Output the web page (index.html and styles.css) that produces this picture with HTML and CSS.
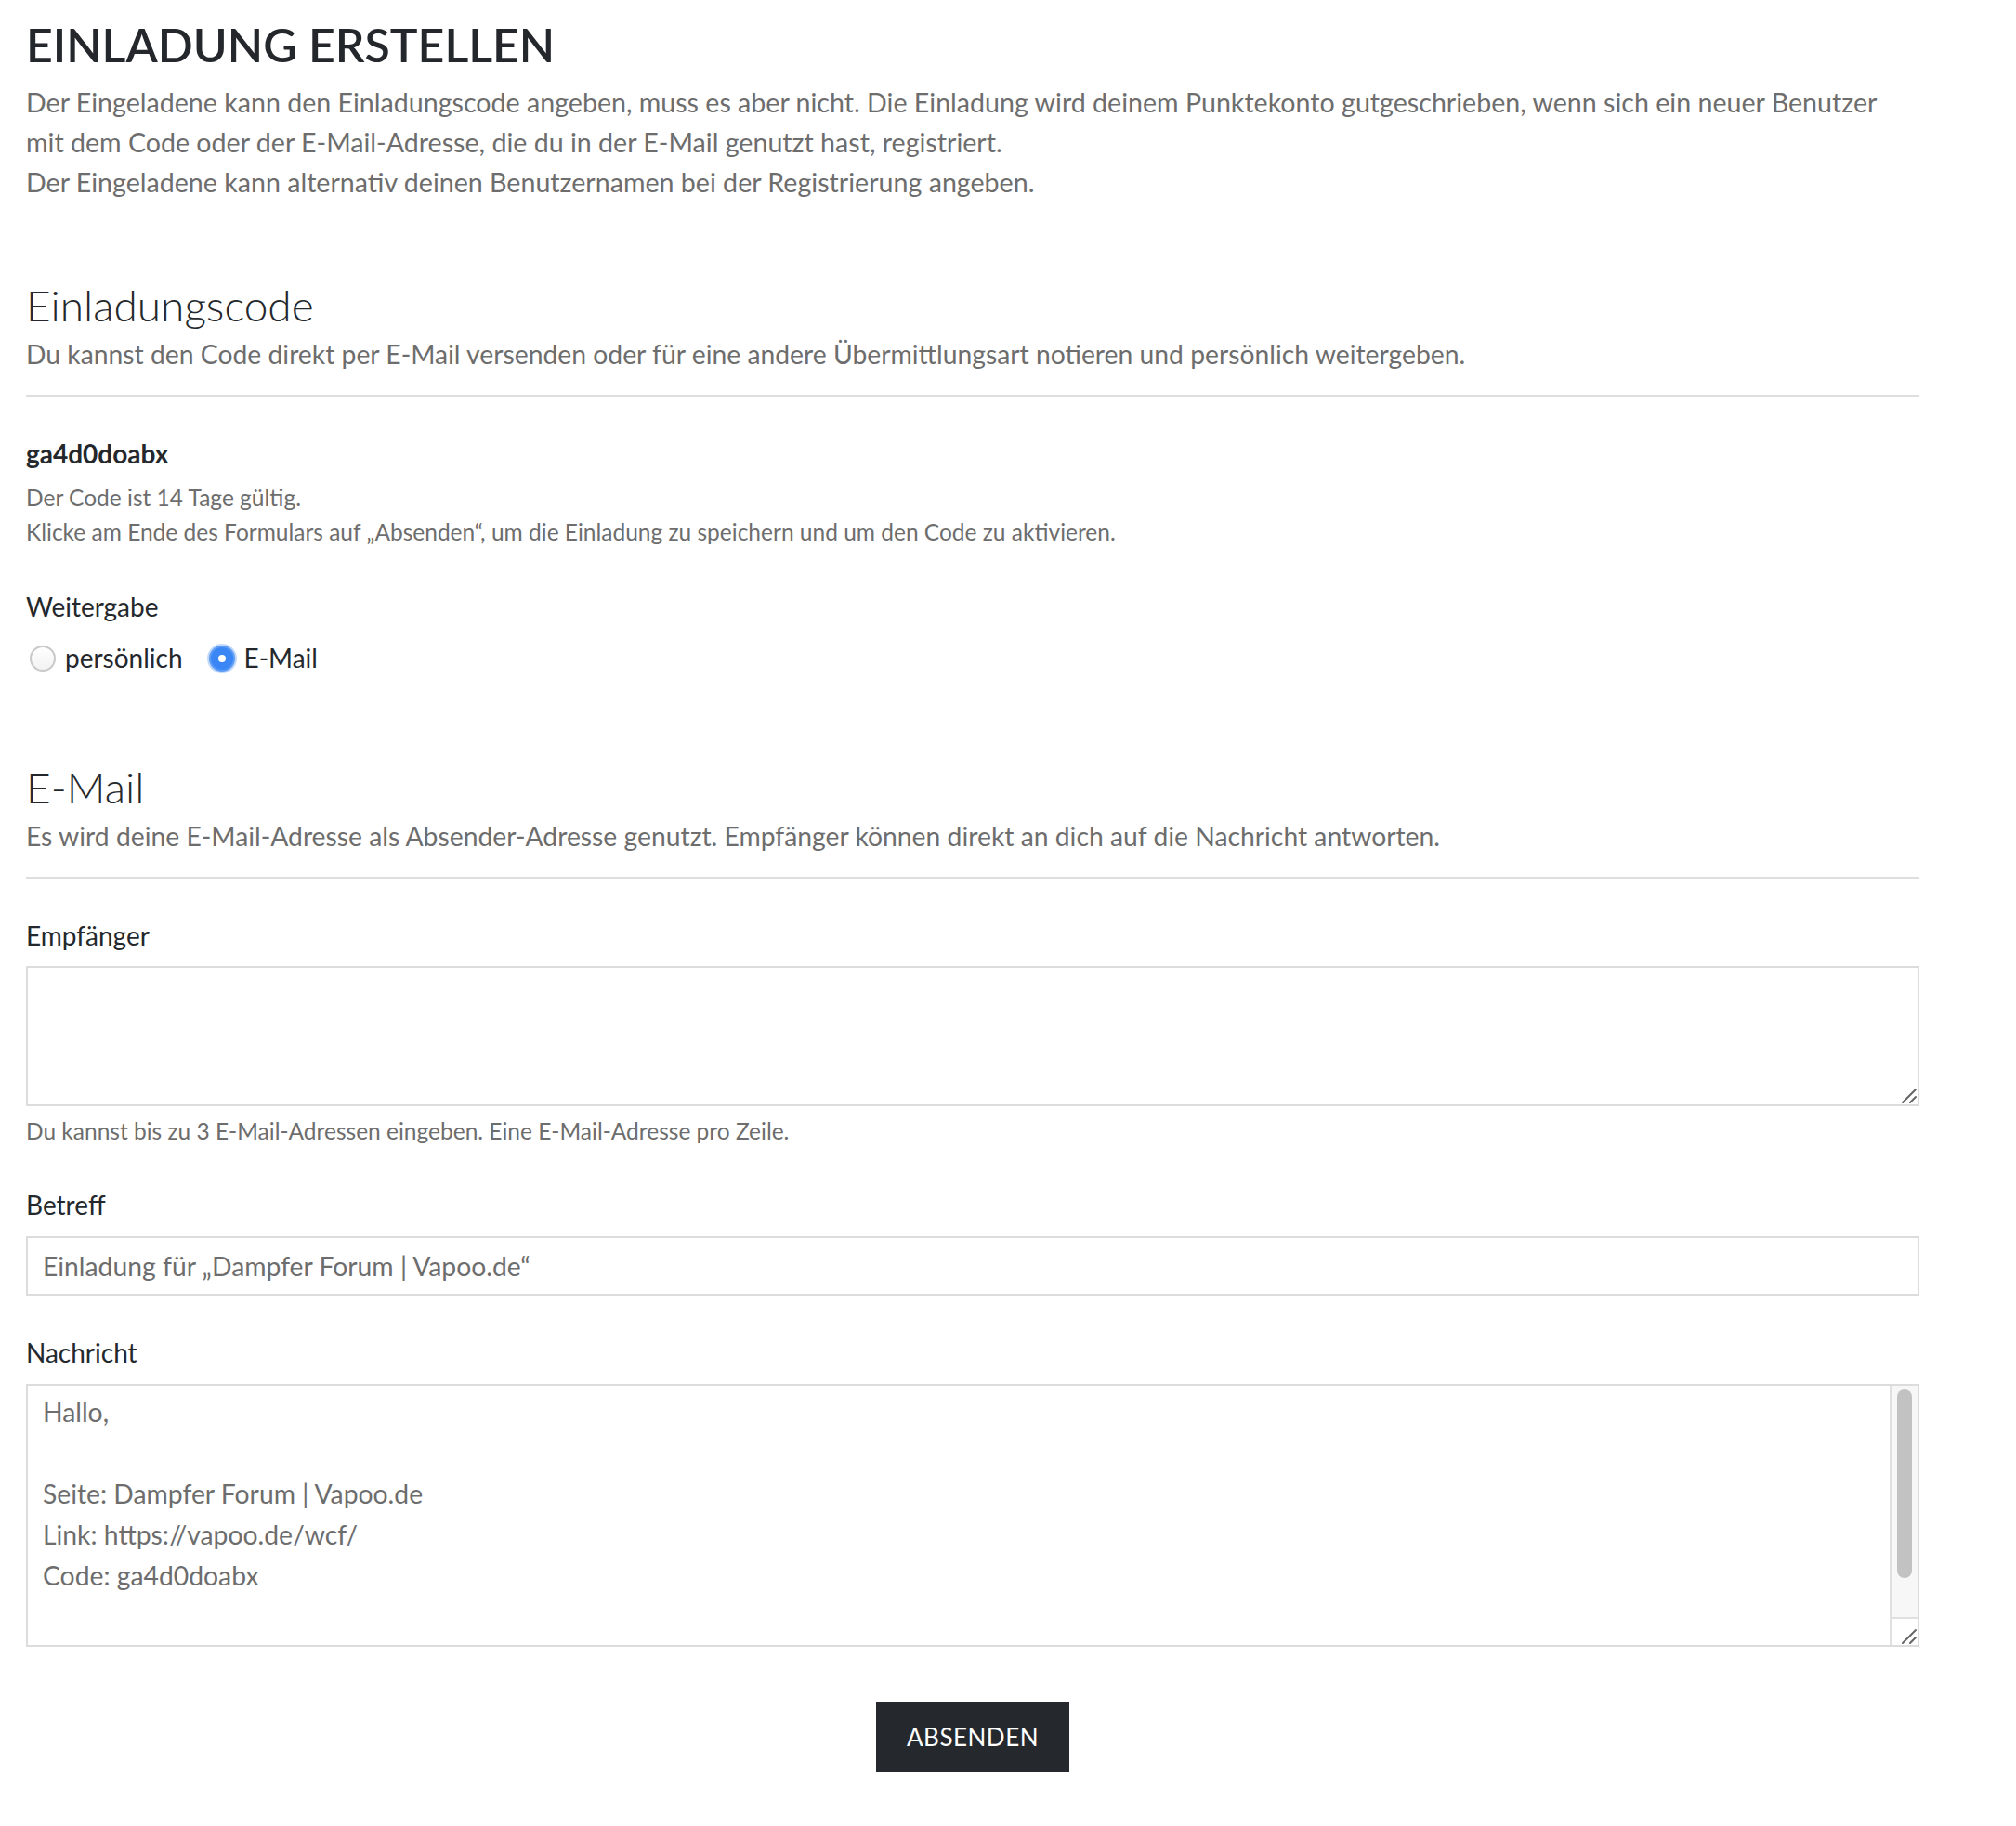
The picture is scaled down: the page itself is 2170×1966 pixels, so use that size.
FILE: index.html
```html
<!DOCTYPE html>
<html lang="de">
<head>
<meta charset="utf-8">
<title>Einladung erstellen</title>
<link rel="stylesheet" href="styles.css">
</head>
<body>
<main class="page">
  <header class="content-header">
    <h1 class="content-title">EINLADUNG ERSTELLEN</h1>
    <p class="content-desc">Der Eingeladene kann den Einladungscode angeben, muss es aber nicht. Die Einladung wird deinem Punktekonto gutgeschrieben, wenn sich ein neuer Benutzer mit dem Code oder der E-Mail-Adresse, die du in der E-Mail genutzt hast, registriert.<br>Der Eingeladene kann alternativ deinen Benutzernamen bei der Registrierung angeben.</p>
  </header>

  <section class="section section-code">
    <header class="section-header">
      <h2 class="section-title">Einladungscode</h2>
      <p class="section-desc">Du kannst den Code direkt per E-Mail versenden oder für eine andere Übermittlungsart notieren und persönlich weitergeben.</p>
    </header>
    <div class="code">ga4d0doabx</div>
    <p class="small">Der Code ist 14 Tage gültig.<br>Klicke am Ende des Formulars auf „Absenden“, um die Einladung zu speichern und um den Code zu aktivieren.</p>

    <div class="field field-share">
      <div class="label">Weitergabe</div>
      <div class="radios">
        <label class="radio"><span class="radio-dot"></span><span>persönlich</span></label>
        <label class="radio"><span class="radio-dot is-checked"></span><span>E-Mail</span></label>
      </div>
    </div>
  </section>

  <section class="section section-mail">
    <header class="section-header">
      <h2 class="section-title">E-Mail</h2>
      <p class="section-desc">Es wird deine E-Mail-Adresse als Absender-Adresse genutzt. Empfänger können direkt an dich auf die Nachricht antworten.</p>
    </header>

    <div class="field field-first">
      <label class="label" for="recipients">Empfänger</label>
      <div class="area-wrap area-wrap-recipients">
        <textarea id="recipients" class="input area-recipients"></textarea>
        <svg class="resizer resizer-plain" width="18" height="18" viewBox="0 0 18 18" aria-hidden="true"><path d="M2 16 L16 2 M10 16 L16 10" stroke="#666" stroke-width="2" stroke-linecap="round" fill="none"/></svg>
      </div>
      <p class="small help">Du kannst bis zu 3 E-Mail-Adressen eingeben. Eine E-Mail-Adresse pro Zeile.</p>
    </div>

    <div class="field">
      <label class="label" for="subject">Betreff</label>
      <input id="subject" class="input input-text" type="text" value="Einladung für „Dampfer Forum | Vapoo.de“">
    </div>

    <div class="field">
      <label class="label" for="message">Nachricht</label>
      <div class="area-wrap area-wrap-message">
        <textarea id="message" class="input area-message">Hallo,

Seite: Dampfer Forum | Vapoo.de
Link: https://vapoo.de/wcf/
Code: ga4d0doabx

</textarea>
        <div class="fake-scroll" aria-hidden="true">
          <div class="fake-track"><div class="fake-thumb"></div></div>
          <div class="fake-corner">
            <svg class="resizer" width="18" height="18" viewBox="0 0 18 18"><path d="M2 16 L16 2 M10 16 L16 10" stroke="#666" stroke-width="2" stroke-linecap="round" fill="none"/></svg>
          </div>
        </div>
      </div>
    </div>
  </section>

  <div class="form-submit">
    <button class="button" type="button">ABSENDEN</button>
  </div>
</main>
</body>
</html>
```

FILE: styles.css
```css
html, body {
  margin: 0;
  padding: 0;
  background: #ffffff;
}

body {
  font-family: Lato, "Open Sans", sans-serif;
  font-size: 28px;
  line-height: 43px;
  color: #24282c;
}

.page {
  width: 2038px;
  margin-left: 28px;
  padding-top: 16px;
}

.content-title {
  margin: 0;
  font-size: 50px;
  line-height: 64px;
  font-weight: 600;
  color: #24282c;
}

.content-desc {
  margin: 9px 0 0;
  font-size: 28.6px;
  color: #6d6d6d;
}

.section {
  margin-top: 83px;
}

.section-mail {
  margin-top: 90px;
}

.section-header {
  padding-bottom: 22px;
  border-bottom: 2px solid #dedede;
}

.section-title {
  margin: 0;
  font-size: 46px;
  line-height: 56px;
  font-weight: 300;
  color: #24282c;
}

.section-desc {
  margin: 3px 0 0;
  font-size: 28.3px;
  color: #6d6d6d;
}

.code {
  margin-top: 40px;
  font-weight: 700;
}

.small {
  margin: 7px 0 0;
  font-size: 24.5px;
  line-height: 37px;
  color: #6d6d6d;
}

.field {
  margin-top: 40px;
}

.field-share {
  margin-top: 41px;
}

.field-first {
  margin-top: 40px;
}

.label {
  display: block;
  color: #24282c;
}

.radios {
  display: flex;
  align-items: center;
  margin-top: 12px;
}

.radio {
  display: inline-flex;
  align-items: center;
  gap: 10px;
  margin-right: 24px;
}

.radio-dot {
  box-sizing: border-box;
  width: 28px;
  height: 28px;
  margin-left: 4px;
  border-radius: 50%;
  border: 2px solid #c9c9c9;
  background: linear-gradient(#ffffff, #f2f2f2);
  position: relative;
}

.radio-dot.is-checked {
  border: 2px solid #5c9cf5;
  background: #3a86f4;
  box-shadow: 0 0 0 2px rgba(120, 170, 245, 0.45);
}

.radio-dot.is-checked::after {
  content: "";
  position: absolute;
  left: 50%;
  top: 50%;
  width: 8px;
  height: 8px;
  margin: -4px 0 0 -4px;
  border-radius: 50%;
  background: #ffffff;
}

.input {
  display: block;
  box-sizing: border-box;
  width: 100%;
  margin: 12px 0 0;
  border: 2px solid #dcdcdc;
  border-radius: 0;
  background: #ffffff;
  font-family: Lato, "Open Sans", sans-serif;
  font-size: 28.3px;
  color: #6d6d6d;
  outline: none;
}

.area-wrap {
  position: relative;
  margin-top: 11px;
}

.area-wrap-message {
  margin-top: 12px;
}

.area-wrap .input {
  margin: 0;
  resize: none;
}

.area-recipients {
  height: 151px;
  padding: 6px 16px;
  line-height: 44px;
}

.resizer {
  position: absolute;
  display: block;
}

.resizer-plain {
  right: 2px;
  bottom: 2px;
}

.help {
  margin-top: 8px;
}

.input-text {
  height: 64px;
  padding: 0 16px;
}

.area-message {
  height: 283px;
  padding: 6px 48px 20px 16px;
  line-height: 44px;
  overflow: hidden;
}

.fake-scroll {
  position: absolute;
  top: 2px;
  right: 2px;
  bottom: 2px;
  width: 30px;
  display: flex;
  flex-direction: column;
  border-left: 2px solid #e0e0e0;
  box-sizing: border-box;
}

.fake-track {
  flex: 1;
  background: #f7f7f7;
  padding: 4px 6px 0 6px;
}

.fake-thumb {
  height: 203px;
  border-radius: 8px;
  background: #c2c2c2;
}

.fake-corner {
  position: relative;
  height: 30px;
  border-top: 2px solid #e0e0e0;
  background: #ffffff;
  box-sizing: border-box;
}

.fake-corner .resizer {
  right: 0;
  bottom: 0;
}

.form-submit {
  margin-top: 59px;
  text-align: center;
}

.button {
  height: 76px;
  padding: 0 33px;
  border: 0;
  border-radius: 0;
  background: #25292e;
  color: #ffffff;
  font-family: Lato, "Open Sans", sans-serif;
  font-size: 26px;
  letter-spacing: 0.5px;
}
```
